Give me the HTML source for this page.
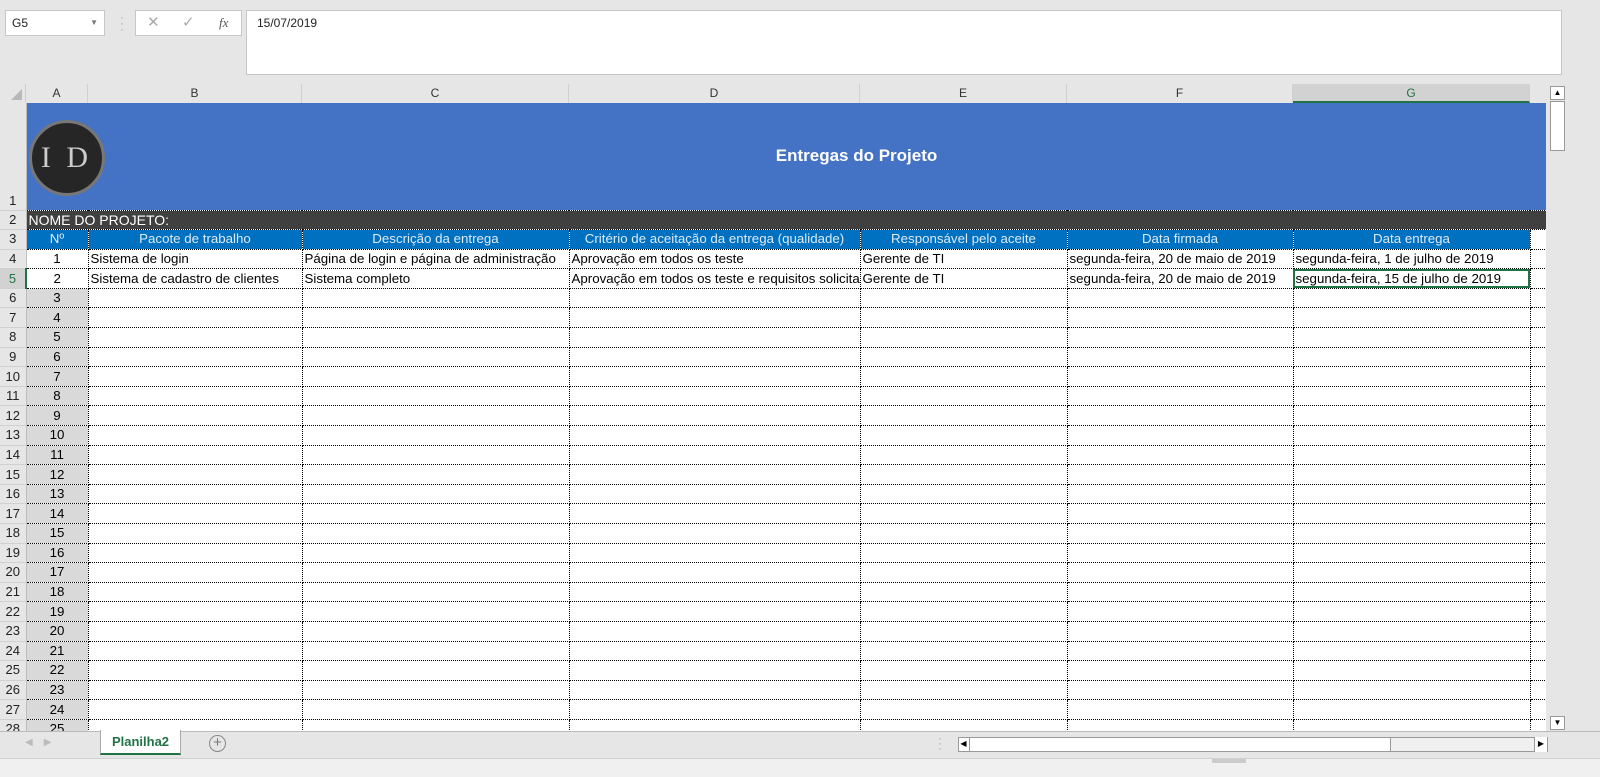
<!DOCTYPE html>
<html><head><meta charset="utf-8"><style>
*{margin:0;padding:0;box-sizing:border-box}
body{width:1600px;height:777px;background:#e6e6e6;font-family:"Liberation Sans",sans-serif;position:relative;overflow:hidden}
.abs{position:absolute}
#grid{position:absolute;left:0;top:103px;width:1546px;border-collapse:collapse;table-layout:fixed;background:#fff}
#grid td{height:19.6px;font-size:13.3px;padding:0 2px;white-space:nowrap;overflow:hidden;border-right:1px dotted #000;border-bottom:1px dotted #000;line-height:18px}
#grid td.rh{background:#e6e6e6;border-right:1px solid #bdbdbd;border-bottom:1px solid #d0d0d0;color:#222;text-align:center;padding:0;font-size:13px}
#grid td.n{background:#d9d9d9;text-align:center}
#grid tr.h td{background:#0070c0;color:#ddebf7;text-align:center}
.ch{position:absolute;top:84px;height:19px;font-size:12px;color:#333;text-align:center;line-height:19px;border-right:1px solid #d0d0d0;background:#e6e6e6}
</style></head><body>
<div class="abs" style="left:5px;top:10px;width:100px;height:26px;background:#fff;border:1px solid #c6c6c6;font-size:12px;line-height:24px;padding-left:6px;color:#222">G5<span style="position:absolute;right:6px;top:0;font-size:8px;color:#777">▼</span></div>
<div class="abs" style="left:120px;top:14px;font-size:12px;color:#aaa;line-height:6px">·<br>·<br>·</div>
<div class="abs" style="left:135px;top:10px;width:107px;height:26px;background:#fff;border:1px solid #c6c6c6;font-size:15px;line-height:24px;color:#aaa">
<span style="position:absolute;left:11px">✕</span><span style="position:absolute;left:46px">✓</span><span style="position:absolute;left:83px;color:#555;font-family:'Liberation Serif',serif;font-style:italic;font-size:13px">fx</span></div>
<div class="abs" style="left:246px;top:10px;width:1316px;height:65px;background:#fff;border:1px solid #c6c6c6;font-size:12px;padding:5px 0 0 10px;color:#222">15/07/2019</div>
<div class="abs" style="left:0;top:84px;width:26px;height:19px;background:#e6e6e6;border-right:1px solid #d0d0d0"><div style="position:absolute;right:3px;bottom:3px;width:0;height:0;border-left:11px solid transparent;border-bottom:11px solid #b8b8b8"></div></div>
<div class="ch" style="left:26px;width:62px">A</div>
<div class="ch" style="left:88px;width:214px">B</div>
<div class="ch" style="left:302px;width:267px">C</div>
<div class="ch" style="left:569px;width:291px">D</div>
<div class="ch" style="left:860px;width:207px">E</div>
<div class="ch" style="left:1067px;width:226px">F</div>
<div class="ch" style="left:1293px;width:237px;background:#d2d2d2;border-bottom:2px solid #217346;color:#217346">G</div>
<table id="grid">
<colgroup><col style="width:26px"><col style="width:62px"><col style="width:214px"><col style="width:267px"><col style="width:291px"><col style="width:207px"><col style="width:226px"><col style="width:237px"><col style="width:16px"></colgroup>
<tr><td class="rh" style="height:107px;vertical-align:bottom">1</td><td colspan="8" style="background:#4472c4;border:none;border-bottom:1px dotted #000;height:107px;position:relative;overflow:visible">
<div style="position:absolute;left:2px;top:17px;width:76px;height:76px;border-radius:50%;background:#262626;border:3px solid #777;color:#ccc;font-family:'Liberation Serif',serif;font-size:30px;text-align:center;line-height:70px;letter-spacing:4px">I D</div>
<div style="position:absolute;left:700px;top:44px;width:260px;text-align:center;color:#fff;font-weight:bold;font-size:17px">Entregas do Projeto</div></td></tr>
<tr><td class="rh">2</td><td colspan="8" style="background:#404040;color:#fff;font-size:14px">NOME DO PROJETO:</td></tr>
<tr class="h"><td class="rh" style="background:#e6e6e6;color:#222">3</td><td>Nº</td><td>Pacote de trabalho</td><td>Descrição da entrega</td><td>Critério de aceitação da entrega (qualidade)</td><td>Responsável pelo aceite</td><td>Data firmada</td><td>Data entrega</td><td style="background:#fff"></td></tr>
<tr><td class="rh">4</td><td style="text-align:center">1</td><td>Sistema de login</td><td>Página de login e página de administração</td><td>Aprovação em todos os teste</td><td>Gerente de TI</td><td>segunda-feira, 20 de maio de 2019</td><td>segunda-feira, 1 de julho de 2019</td><td></td></tr>
<tr><td class="rh" style="background:#d2d2d2;color:#217346;border-right:2px solid #217346">5</td><td style="text-align:center">2</td><td>Sistema de cadastro de clientes</td><td>Sistema completo</td><td>Aprovação em todos os teste e requisitos solicitados</td><td>Gerente de TI</td><td>segunda-feira, 20 de maio de 2019</td><td style="outline:2px solid #217346;outline-offset:-2px">segunda-feira, 15 de julho de 2019</td><td></td></tr>
<tr><td class="rh">6</td><td class="n">3</td><td></td><td></td><td></td><td></td><td></td><td></td><td></td></tr>
<tr><td class="rh">7</td><td class="n">4</td><td></td><td></td><td></td><td></td><td></td><td></td><td></td></tr>
<tr><td class="rh">8</td><td class="n">5</td><td></td><td></td><td></td><td></td><td></td><td></td><td></td></tr>
<tr><td class="rh">9</td><td class="n">6</td><td></td><td></td><td></td><td></td><td></td><td></td><td></td></tr>
<tr><td class="rh">10</td><td class="n">7</td><td></td><td></td><td></td><td></td><td></td><td></td><td></td></tr>
<tr><td class="rh">11</td><td class="n">8</td><td></td><td></td><td></td><td></td><td></td><td></td><td></td></tr>
<tr><td class="rh">12</td><td class="n">9</td><td></td><td></td><td></td><td></td><td></td><td></td><td></td></tr>
<tr><td class="rh">13</td><td class="n">10</td><td></td><td></td><td></td><td></td><td></td><td></td><td></td></tr>
<tr><td class="rh">14</td><td class="n">11</td><td></td><td></td><td></td><td></td><td></td><td></td><td></td></tr>
<tr><td class="rh">15</td><td class="n">12</td><td></td><td></td><td></td><td></td><td></td><td></td><td></td></tr>
<tr><td class="rh">16</td><td class="n">13</td><td></td><td></td><td></td><td></td><td></td><td></td><td></td></tr>
<tr><td class="rh">17</td><td class="n">14</td><td></td><td></td><td></td><td></td><td></td><td></td><td></td></tr>
<tr><td class="rh">18</td><td class="n">15</td><td></td><td></td><td></td><td></td><td></td><td></td><td></td></tr>
<tr><td class="rh">19</td><td class="n">16</td><td></td><td></td><td></td><td></td><td></td><td></td><td></td></tr>
<tr><td class="rh">20</td><td class="n">17</td><td></td><td></td><td></td><td></td><td></td><td></td><td></td></tr>
<tr><td class="rh">21</td><td class="n">18</td><td></td><td></td><td></td><td></td><td></td><td></td><td></td></tr>
<tr><td class="rh">22</td><td class="n">19</td><td></td><td></td><td></td><td></td><td></td><td></td><td></td></tr>
<tr><td class="rh">23</td><td class="n">20</td><td></td><td></td><td></td><td></td><td></td><td></td><td></td></tr>
<tr><td class="rh">24</td><td class="n">21</td><td></td><td></td><td></td><td></td><td></td><td></td><td></td></tr>
<tr><td class="rh">25</td><td class="n">22</td><td></td><td></td><td></td><td></td><td></td><td></td><td></td></tr>
<tr><td class="rh">26</td><td class="n">23</td><td></td><td></td><td></td><td></td><td></td><td></td><td></td></tr>
<tr><td class="rh">27</td><td class="n">24</td><td></td><td></td><td></td><td></td><td></td><td></td><td></td></tr>
<tr><td class="rh">28</td><td class="n">25</td><td></td><td></td><td></td><td></td><td></td><td></td><td></td></tr>
</table>
<div class="abs" style="left:1546px;top:84px;width:54px;height:647px;background:#e6e6e6"></div>
<div class="abs" style="left:1550px;top:86px;width:15px;height:14px;background:#fff;border:1px solid #999;font-size:8px;text-align:center;line-height:12px">▲</div>
<div class="abs" style="left:1550px;top:101px;width:15px;height:50px;background:#fff;border:1px solid #999"></div>
<div class="abs" style="left:1550px;top:716px;width:15px;height:14px;background:#fff;border:1px solid #999;font-size:8px;text-align:center;line-height:12px">▼</div>
<div class="abs" style="left:0;top:731px;width:1600px;height:27px;background:#e6e6e6;border-top:1px solid #bbb"></div>
<div class="abs" style="left:25px;top:737px;font-size:10px;color:#bbb">◀&nbsp;&nbsp;&nbsp;&nbsp;▶</div>
<div class="abs" style="left:100px;top:730px;width:81px;height:25px;background:#fff;border:1px solid #aaa;border-top:none;border-bottom:2px solid #217346;color:#217346;font-weight:bold;font-size:13px;text-align:center;line-height:24px">Planilha2</div>
<div class="abs" style="left:209px;top:735px;width:17px;height:17px;border:1px solid #888;border-radius:50%;color:#777;font-size:15px;line-height:14px;text-align:center">+</div>
<div class="abs" style="left:938px;top:736px;font-size:12px;color:#aaa;line-height:5px">·<br>·<br>·</div>
<div class="abs" style="left:958px;top:737px;width:590px;height:15px;background:#f0f0f0;border:1px solid #999"></div>
<div class="abs" style="left:958px;top:737px;width:433px;height:15px;background:#fff;border:1px solid #999"></div>
<div class="abs" style="left:958px;top:737px;width:12px;height:15px;border-right:1px solid #999;font-size:8px;line-height:13px;text-align:center">◀</div>
<div class="abs" style="left:1534px;top:737px;width:14px;height:15px;border-left:1px solid #999;background:#fff;font-size:8px;line-height:13px;text-align:center;border-right:1px solid #999">▶</div>
<div class="abs" style="left:0;top:758px;width:1600px;height:19px;background:#f0f0f0;border-top:1px solid #d0d0d0"></div>
<div class="abs" style="left:1212px;top:759px;width:34px;height:4px;background:#ccc"></div>
</body></html>
